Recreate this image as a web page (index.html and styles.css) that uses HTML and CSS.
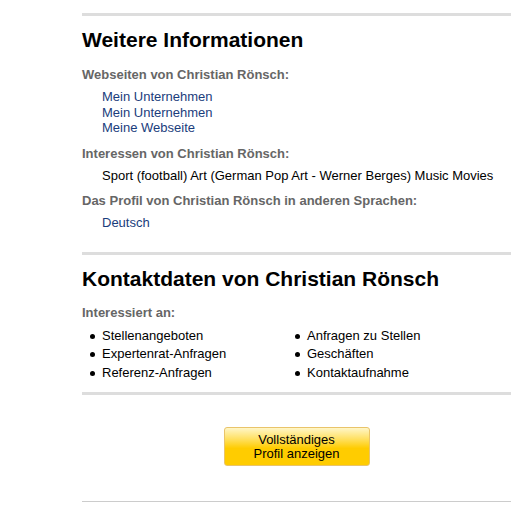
FILE: index.html
```
<!DOCTYPE html>
<html lang="de">
<head>
<meta charset="utf-8">
<link rel="stylesheet" href="styles.css">
</head>
<body>
<div class="page">
  <section class="sec sec-info">
    <h2 class="title">Weitere Informationen</h2>
    <div class="label l-web">Webseiten von Christian Rönsch:</div>
    <ul class="links">
      <li><a href="#">Mein Unternehmen</a></li>
      <li><a href="#">Mein Unternehmen</a></li>
      <li><a href="#">Meine Webseite</a></li>
    </ul>
    <div class="label l-int">Interessen von Christian Rönsch:</div>
    <p class="text">Sport (football) Art (German Pop Art - Werner Berges) Music Movies</p>
    <div class="label l-lang">Das Profil von Christian Rönsch in anderen Sprachen:</div>
    <ul class="links links-lang">
      <li><a href="#">Deutsch</a></li>
    </ul>
  </section>
  <section class="sec sec-contact">
    <h2 class="title title-contact">Kontaktdaten von Christian Rönsch</h2>
    <div class="label l-contact">Interessiert an:</div>
    <ul class="bullets">
      <li>Stellenangeboten</li>
      <li>Anfragen zu Stellen</li>
      <li>Expertenrat-Anfragen</li>
      <li>Geschäften</li>
      <li>Referenz-Anfragen</li>
      <li>Kontaktaufnahme</li>
    </ul>
  </section>
  <section class="sec sec-btn">
    <a href="#" class="btn">Vollständiges<br>Profil anzeigen</a>
  </section>
  <div class="bottom-line"></div>
</div>
</body>
</html>
```
FILE: styles.css
```
html, body {
  margin: 0;
  padding: 0;
  background: #fff;
}
body {
  font-family: "Liberation Sans", Arial, sans-serif;
  font-size: 13px;
  color: #000;
}
.page {
  padding-left: 82px;
  padding-top: 13px;
}
.sec {
  border-top: 3px solid #dddddd;
}
.title {
  margin: 12px 0 0;
  font-size: 21px;
  line-height: 24px;
  font-weight: bold;
  color: #000;
}
.title-contact {
  margin-top: 12px;
}
.label {
  font-size: 13px;
  line-height: 16px;
  font-weight: bold;
  color: #666666;
}
.l-web { margin-top: 15px; }
.l-int { margin-top: 10.5px; }
.l-lang { margin-top: 9px; }
.l-contact { margin-top: 14px; }
.links {
  list-style: none;
  margin: 6px 0 0;
  padding: 0 0 0 20px;
}
.links li {
  line-height: 15.5px;
}
.links a {
  color: #1a3d7c;
  text-decoration: none;
}
.links-lang {
  margin-bottom: 21px;
}
.text {
  margin: 6px 0 0;
  padding-left: 20px;
  line-height: 16px;
}
.bullets {
  list-style: none;
  margin: 6px 0 10px;
  padding: 0 0 0 20px;
  display: grid;
  grid-template-columns: 205px 205px;
}
.bullets li {
  line-height: 18.5px;
  position: relative;
}
.bullets li::before {
  content: "";
  position: absolute;
  left: -12px;
  top: 7px;
  width: 5px;
  height: 5px;
  border-radius: 50%;
  background: #000;
}
.sec-btn {
  display: flex;
  justify-content: center;
  padding-top: 32px;
  padding-bottom: 35px;
}
.btn {
  display: block;
  width: 144px;
  padding: 5px 0 4px;
  border: 1px solid #e9c46a;
  border-radius: 3px;
  background: linear-gradient(to bottom, #fff6c8 0%, #ffe060 30%, #ffcc00 55%, #ffcc00 100%);
  color: #000;
  text-align: center;
  font-size: 13px;
  line-height: 14px;
  text-decoration: none;
}
.bottom-line {
  height: 1px;
  background: #cccccc;
}
```
